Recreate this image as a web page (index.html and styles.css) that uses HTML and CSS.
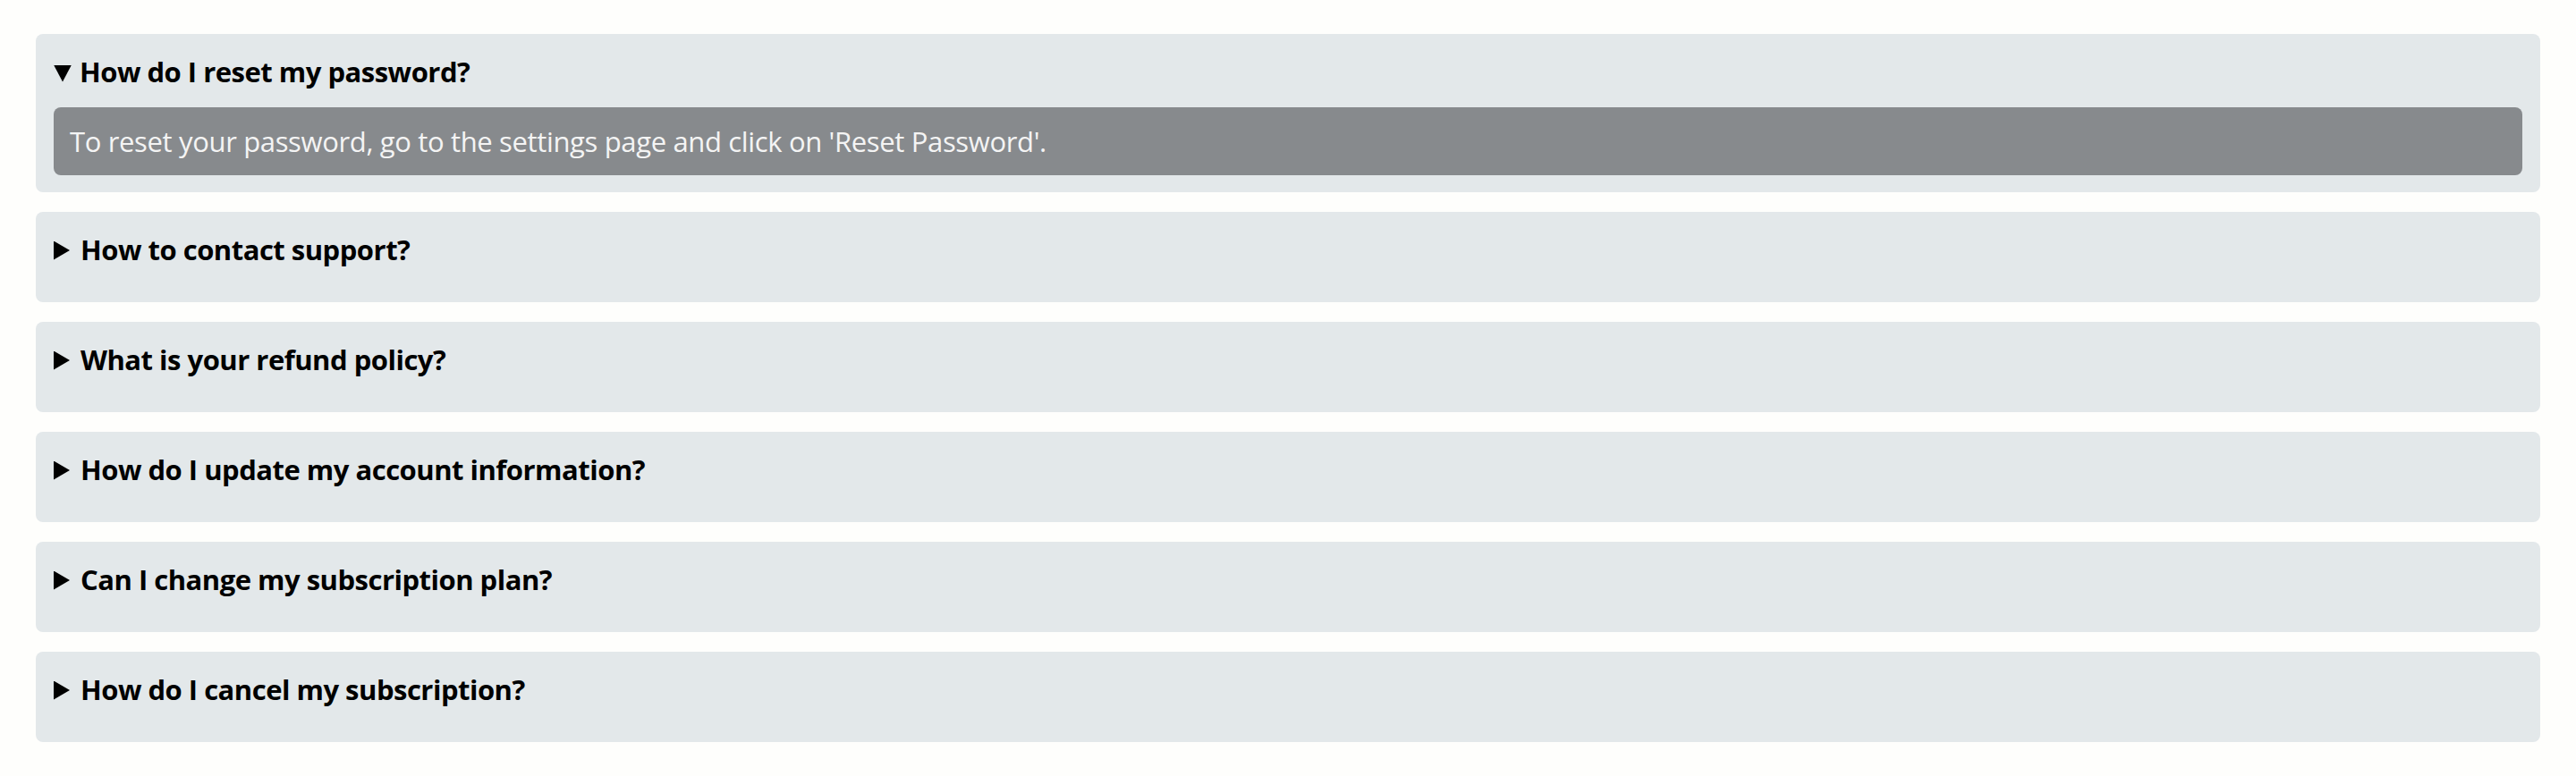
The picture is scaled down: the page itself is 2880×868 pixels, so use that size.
FILE: index.html
```html
<!DOCTYPE html>
<html lang="en">
<head>
<meta charset="utf-8">
<title>FAQ</title>
<link rel="stylesheet" href="styles.css">
</head>
<body>
<main class="faq">
  <details class="item" open>
    <summary class="question">How do I reset my password?</summary>
    <div class="answer">To reset your password, go to the settings page and click on 'Reset Password'.</div>
  </details>
  <details class="item">
    <summary class="question">How to contact support?</summary>
    <div class="answer">You can contact support via email.</div>
  </details>
  <details class="item">
    <summary class="question">What is your refund policy?</summary>
    <div class="answer">Refunds are available within 30 days.</div>
  </details>
  <details class="item">
    <summary class="question">How do I update my account information?</summary>
    <div class="answer">Go to your profile page.</div>
  </details>
  <details class="item">
    <summary class="question">Can I change my subscription plan?</summary>
    <div class="answer">Yes, from the billing page.</div>
  </details>
  <details class="item">
    <summary class="question">How do I cancel my subscription?</summary>
    <div class="answer">Go to the billing page and click cancel.</div>
  </details>
</main>
</body>
</html>
```

FILE: styles.css
```css
html, body {
  margin: 0;
  padding: 0;
  background: #fefefc;
}

body {
  font-family: "Open Sans", "Noto Sans", sans-serif;
  color: #000;
}

.faq {
  display: flex;
  flex-direction: column;
  gap: 22px;
  padding: 38px 40px;
}

.item {
  background: #e3e8ea;
  border-radius: 8px;
  padding: 21px 20px 19px;
}

.question {
  display: flex;
  align-items: center;
  list-style: none;
  font-size: 31px;
  font-weight: 700;
  letter-spacing: -0.5px;
  line-height: 42px;
  margin-bottom: 19px;
  cursor: pointer;
}

.question::-webkit-details-marker {
  display: none;
}

.question::before {
  content: "";
  flex: none;
  width: 18px;
  height: 21px;
  margin-right: 12px;
  background: #000;
  clip-path: polygon(0 0, 100% 50%, 0 100%);
  position: relative;
  top: 1px;
}

.item[open] > .question::before {
  width: 20px;
  height: 19px;
  margin-right: 9px;
  clip-path: polygon(0 0, 100% 0, 50% 100%);
  top: 2px;
}

.answer {
  background: #878a8d;
  color: #f4f4f4;
  border-radius: 8px;
  font-size: 31px;
  font-weight: 400;
  letter-spacing: -0.35px;
  line-height: 44px;
  padding: 16px 18px;
}
```
